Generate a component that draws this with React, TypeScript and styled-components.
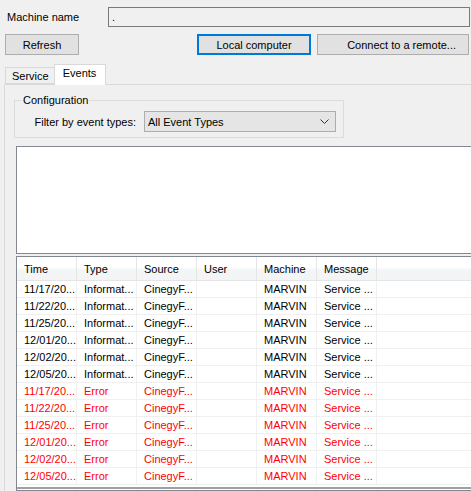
import React from "react";
import styled, { createGlobalStyle } from "styled-components";

const Global = createGlobalStyle`
  html, body { margin: 0; padding: 0; background: #f0f0f0; }
  body { font-family: "Liberation Sans", Arial, sans-serif; font-size: 11px; color: #000; }
  * { box-sizing: border-box; }
`;

const Window = styled.div`
  width: 471px;
  height: 491px;
  overflow: hidden;
  background: #f0f0f0;
  display: flex;
  flex-direction: column;
`;

const MachineRow = styled.div`
  display: flex;
  align-items: center;
  padding: 7px 0 0 7px;
`;

const Label = styled.span`
  width: 101px;
  font-size: 11px;
  white-space: nowrap;
`;

const TextBox = styled.div`
  width: 362px;
  height: 20px;
  border: 1px solid #7a7a7a;
  background: #f0f0f0;
  padding-left: 3px;
  display: flex;
  align-items: center;
`;

const ButtonRow = styled.div`
  display: flex;
  padding: 7px 0 0 5px;
`;

const Button = styled.button<{ $width: number; $offset?: number; $focused?: boolean; $align?: string }>`
  width: ${(p) => p.$width}px;
  height: 21px;
  margin-left: ${(p) => p.$offset ?? 0}px;
  background: #e1e1e1;
  border: ${(p) => (p.$focused ? "2px solid #0078d7" : "1px solid #adadad")};
  font-family: "Liberation Sans", Arial, sans-serif;
  font-size: 11px;
  color: #000;
  padding: 0 ${(p) => (p.$align === "right" ? "12px" : "0")} 0 0;
  text-align: ${(p) => p.$align ?? "center"};
  white-space: nowrap;
`;

const TabStrip = styled.div`
  display: flex;
  align-items: flex-end;
  margin-top: 9px;
  padding-left: 5px;
  height: 20px;
  position: relative;
  z-index: 1;
`;

const Tab = styled.div<{ $active?: boolean }>`
  height: ${(p) => (p.$active ? 21 : 17)}px;
  margin-bottom: ${(p) => (p.$active ? -1 : 0)}px;
  padding: ${(p) => (p.$active ? "2px 9px 0 8px" : "2px 5px 0 6px")};
  background: ${(p) => (p.$active ? "#ffffff" : "#f0f0f0")};
  border: 1px solid #d9d9d9;
  border-bottom: ${(p) => (p.$active ? "none" : "1px solid #d9d9d9")};
  border-right: ${(p) => (p.$active ? "1px solid #d9d9d9" : "none")};
  font-size: 11px;
  white-space: nowrap;
`;

const Panel = styled.div`
  margin-left: 4px;
  width: 520px;
  flex: 1;
  border-left: 1px solid #d9d9d9;
  border-top: 1px solid #d9d9d9;
  background: #f0f0f0;
  display: flex;
  flex-direction: column;
`;

const Group = styled.fieldset`
  margin: 9px 0 0 9px;
  width: 329px;
  border: 1px solid #dcdcdc;
  padding: 4px 7px 5px 7px;
`;

const Legend = styled.legend`
  padding: 0 1px;
  font-size: 11px;
  line-height: 13px;
`;

const FilterRow = styled.div`
  display: flex;
  align-items: center;
  gap: 8px;
`;

const FilterLabel = styled.span`
  width: 114px;
  text-align: right;
  white-space: nowrap;
`;

const Combo = styled.div`
  width: 192px;
  height: 21px;
  background: #e5e5e5;
  border: 1px solid #adadad;
  display: flex;
  align-items: center;
  justify-content: space-between;
  padding: 0 6px 0 3px;
`;

const WhiteBox = styled.div`
  margin: 8px 0 0 11px;
  height: 108px;
  background: #ffffff;
  border: 1px solid #828790;
`;

const List = styled.div`
  margin: 2px 0 0 11px;
  flex: 1;
  background: #ffffff;
  border: 1px solid #828790;
  display: flex;
  flex-direction: column;
`;

const Grid = styled.div`
  display: grid;
  grid-template-columns: repeat(6, 60px) 1fr;
`;

const Header = styled(Grid)`
  height: 24px;
  background: linear-gradient(#ffffff 0%, #ffffff 45%, #f4f5f6 55%, #f3f4f5 100%);
  border-bottom: 1px solid #e5e5e5;
`;

const HeadCell = styled.div<{ $last?: boolean }>`
  display: flex;
  align-items: center;
  padding-left: 7px;
  border-right: ${(p) => (p.$last ? "none" : "1px solid #e5e5e5")};
  white-space: nowrap;
`;

const Row = styled(Grid)<{ $error?: boolean }>`
  height: 17px;
  border-bottom: 1px solid #f0f0f0;
  color: ${(p) => (p.$error ? "#ff0000" : "#000000")};
`;

const Cell = styled.div<{ $last?: boolean }>`
  display: flex;
  align-items: center;
  padding-left: 7px;
  border-right: ${(p) => (p.$last ? "none" : "1px solid #f0f0f0")};
  white-space: nowrap;
  overflow: hidden;
`;

const Tail = styled(Grid)`
  margin-top: 2px;
  flex: 1;
  border-top: 2px solid #a0a0a0;
`;

const dates = ["11/17/20...", "11/22/20...", "11/25/20...", "12/01/20...", "12/02/20...", "12/05/20..."];
const rows = [
  ...dates.map((d) => ({ time: d, type: "Informat...", error: false })),
  ...dates.map((d) => ({ time: d, type: "Error", error: true })),
];
const headers = ["Time", "Type", "Source", "User", "Machine", "Message"];

const Chevron = () => (
  <svg width="9" height="5" viewBox="0 0 9 5" fill="none">
    <path d="M0.5 0.5 L4.5 4.5 L8.5 0.5" stroke="#333" strokeWidth="1" />
  </svg>
);

export default function App() {
  return (
    <>
      <Global />
      <Window>
        <MachineRow>
          <Label>Machine name</Label>
          <TextBox>.</TextBox>
        </MachineRow>
        <ButtonRow>
          <Button $width={74}>Refresh</Button>
          <Button $width={114} $offset={118} $focused>
            Local computer
          </Button>
          <Button $width={152} $offset={6} $align="right">
            Connect to a remote...
          </Button>
        </ButtonRow>
        <TabStrip>
          <Tab>Service</Tab>
          <Tab $active>Events</Tab>
        </TabStrip>
        <Panel>
          <Group>
            <Legend>Configuration</Legend>
            <FilterRow>
              <FilterLabel>Filter by event types:</FilterLabel>
              <Combo>
                <span>All Event Types</span>
                <Chevron />
              </Combo>
            </FilterRow>
          </Group>
          <WhiteBox />
          <List>
            <Header>
              {headers.map((h) => (
                <HeadCell key={h}>{h}</HeadCell>
              ))}
              <HeadCell $last />
            </Header>
            {rows.map((r, i) => (
              <Row key={i} $error={r.error}>
                <Cell>{r.time}</Cell>
                <Cell>{r.type}</Cell>
                <Cell>CinegyF...</Cell>
                <Cell></Cell>
                <Cell>MARVIN</Cell>
                <Cell>Service ...</Cell>
                <Cell $last />
              </Row>
            ))}
            <Tail>
              <Cell />
              <Cell />
              <Cell />
              <Cell />
              <Cell />
              <Cell />
              <Cell $last />
            </Tail>
          </List>
        </Panel>
      </Window>
    </>
  );
}
